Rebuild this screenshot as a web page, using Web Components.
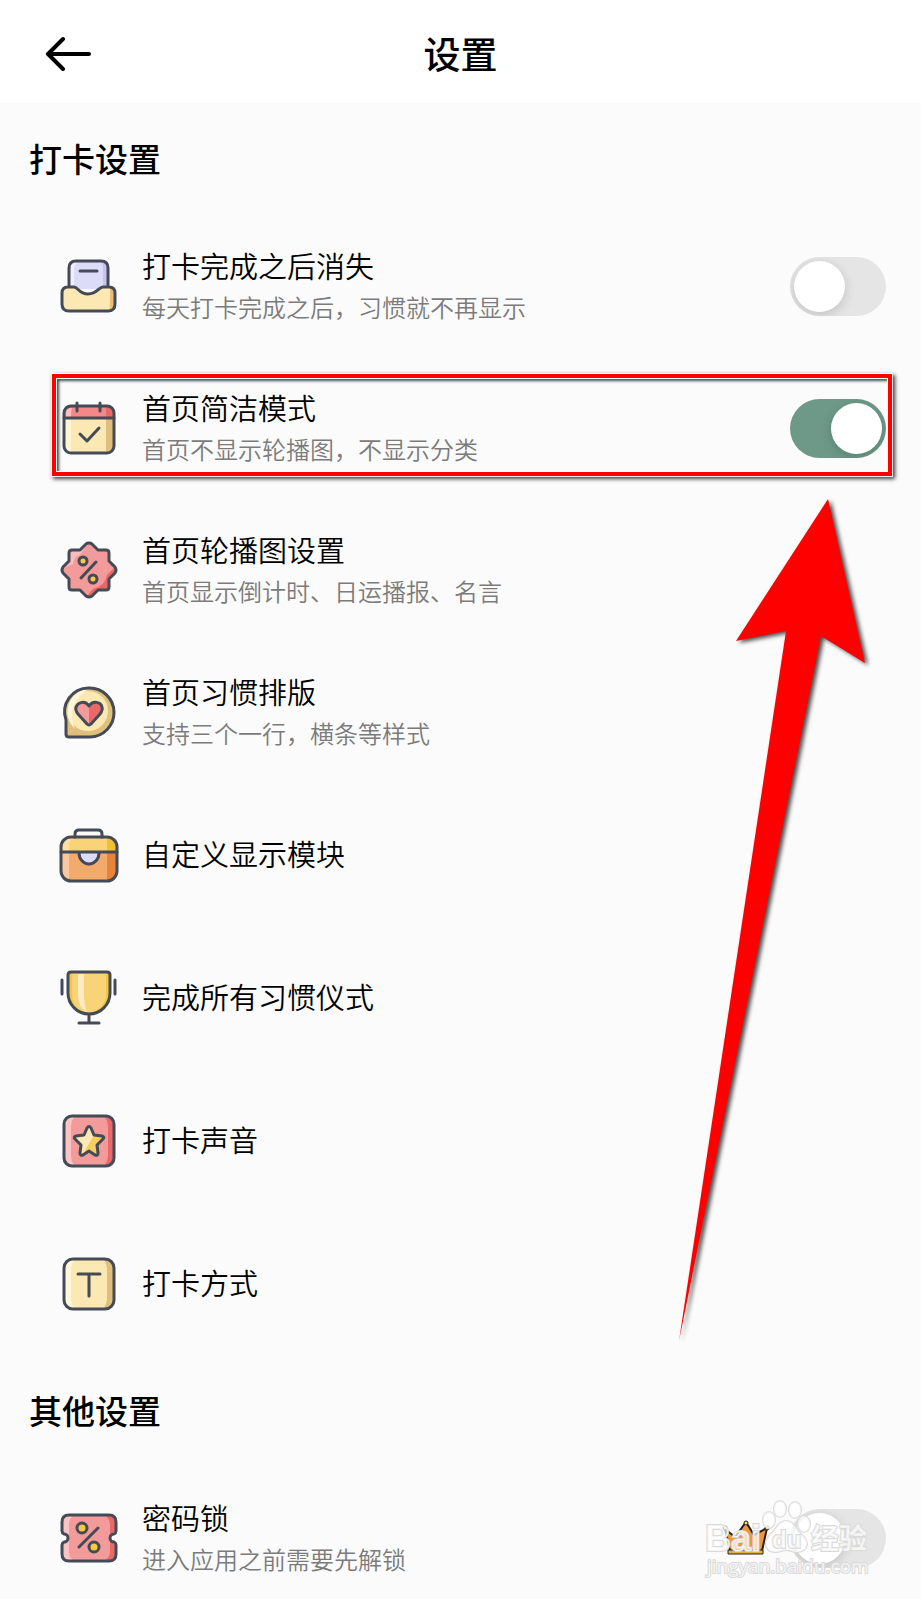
<!DOCTYPE html>
<html lang="zh-CN">
<head>
<meta charset="utf-8">
<meta name="viewport" content="width=device-width, initial-scale=1">
<title>设置</title>
<style>
  body {
    margin: 0;
    background: #FBFBFB;
    color: #000;
    font-family: "Noto Sans CJK SC", "Noto Sans", sans-serif;
  }
</style>
</head>
<body>
<settings-page>
  <page-header slot="header">设置</page-header>
  <settings-section>
    <span slot="title">打卡设置</span>
    <settings-row type="switch" icon="tray">打卡完成之后消失<span slot="note">每天打卡完成之后，习惯就不再显示</span></settings-row>
    <settings-row type="switch" icon="calendar" checked marked>首页简洁模式<span slot="note">首页不显示轮播图，不显示分类</span></settings-row>
    <settings-row icon="badge">首页轮播图设置<span slot="note">首页显示倒计时、日运播报、名言</span></settings-row>
    <settings-row icon="heart">首页习惯排版<span slot="note">支持三个一行，横条等样式</span></settings-row>
    <settings-row icon="bag" single>自定义显示模块</settings-row>
    <settings-row icon="trophy" single>完成所有习惯仪式</settings-row>
    <settings-row icon="star" single>打卡声音</settings-row>
    <settings-row icon="type" single>打卡方式</settings-row>
  </settings-section>
  <settings-section>
    <span slot="title">其他设置</span>
    <settings-row type="switch" icon="ticket">密码锁<span slot="note">进入应用之前需要先解锁</span></settings-row>
  </settings-section>
  <pointer-arrow slot="overlay"></pointer-arrow>
  <site-watermark slot="overlay"></site-watermark>
</settings-page>

<script>
const icons = {
  tray: `
    <path fill="#DCDCF8" d="M11 33V12q0-7 7-7h25q7 0 7 7v21z"/>
    <path fill="#F0F0FD" d="M12 31V12q0-5 5-5h2q-3 2-3 6v18z"/>
    <path fill="#C5C5EF" d="M43 6q6 1 6 7v18h-4V13q0-5-2-7z"/>
    <path fill="#FCE8B2" d="M10 31h6c4 0 5 7 14 7s11-7 15-7h6q6 0 6 6v11q0 7-7 7H11q-7 0-7-7V37q0-6 6-6z"/>
    <path fill="#E8BE78" d="M52 31q5 1 5 6v11q0 6-6 7 1-2 1-7z"/>
    <path class="line" d="M11 31V12q0-7 7-7h25q7 0 7 7v19M22 15h17M10 31h6c4 0 5 7 14 7s11-7 15-7h6q6 0 6 6v11q0 7-7 7H11q-7 0-7-7V37q0-6 6-6z"/>`,
  calendar: `
    <rect x="6" y="8" width="50" height="47" rx="7" fill="#FCE8B2"/>
    <path fill="#FFF4D4" d="M7 20h6v34q-6 0-6-6z"/>
    <path fill="#DFBF7B" d="M48 20h7v28q0 6-7 6z"/>
    <path fill="#F48787" d="M6 20v-5q0-7 7-7h36q7 0 7 7v5z"/>
    <path fill="#FBC0C0" d="M8 19v-4q0-5 6-5-1 2-1 9z"/>
    <path fill="#E96969" d="M48 9q7 0 7 6v5h-7z"/>
    <rect class="line" x="6" y="8" width="50" height="47" rx="7"/>
    <path class="line" d="M6 20h50M19 5v8M42 5v8M22 36l7 7 12-13"/>`,
  badge: `
    <path fill="#F39A9A" d="M31 3q2 0 3 1l6 6h8q3 0 3 3v8l6 6q2 3 0 6l-6 6v8q0 3-3 3h-8l-6 6q-3 2-6 0l-6-6h-8q-3 0-3-3v-8l-6-6q-2-3 0-6l6-6v-8q0-3 3-3h8l6-6q1-1 3-1z"/>
    <path fill="#F9BDBD" d="M29 5l-6 6h-9q-2 0-2 3v8l-6 6 9-4q1-8 7-9z"/>
    <path fill="#E96666" d="M56 28l2 2-7 8v9q0 3-4 3h-8l-8 8-2-2 6-7q12-3 14-14z"/>
    <path class="line" d="M31 3q2 0 3 1l6 6h8q3 0 3 3v8l6 6q2 3 0 6l-6 6v8q0 3-3 3h-8l-6 6q-3 2-6 0l-6-6h-8q-3 0-3-3v-8l-6-6q-2-3 0-6l6-6v-8q0-3 3-3h8l6-6q1-1 3-1z"/>
    <path class="line" d="M23 38l15-16"/>
    <circle class="line gold" cx="25" cy="21" r="4"/>
    <circle class="line gold" cx="35" cy="39" r="4"/>`,
  heart: `
    <path fill="#DFBF7B" d="M31 6a24 24 0 0 1 1 49H11q-3 0-3-3V38A24 24 0 0 1 31 6z"/>
    <circle cx="30" cy="29" r="20" fill="#FCE8B2"/>
    <path fill="#FFF6DC" d="M31 7a23 23 0 0 0-14 40A30 30 0 0 1 31 7z"/>
    <path fill="#F39A9A" d="M31 43l-11-11q-3-4-2-7c2-5 9-7 13-1 4-6 12-4 13 1q1 3-2 7z"/>
    <path fill="#EA6868" d="M31 42V24c4-6 12-4 13 1q1 3-2 7z"/>
    <path class="line" d="M31 6a24 24 0 0 1 1 49H11q-3 0-3-3V38A24 24 0 0 1 31 6z"/>
    <path class="line" d="M29 42l-9-10q-3-4-2-7c2-5 9-7 13-1 4-6 12-4 13 1q1 3-2 7l-9 10q-2 2-4 0z"/>`,
  bag: `
    <rect x="3" y="12" width="56" height="44" rx="10" fill="#F3AA6D"/>
    <path fill="#F8C99F" d="M4 28h7v27q-7-1-7-9z"/>
    <path fill="#E98339" d="M49 28h9v18q0 9-9 9z"/>
    <path fill="#F8D377" d="M3 27v-5q0-10 10-10h36q10 0 10 10v5z"/>
    <path fill="#FBE2A3" d="M5 26v-5q0-7 8-7-2 4-2 12z"/>
    <path fill="#F2BF32" d="M49 13q9 0 9 9v5h-9z"/>
    <path fill="#DCDCF8" d="M21 28a10 11 0 0 0 20 0z"/>
    <path class="line" d="M3 27h56M21 28a10 11 0 0 0 20 0M17 12V9q0-4 4-4h19q4 0 4 4v3"/>
    <rect class="line" x="3" y="12" width="56" height="44" rx="10"/>`,
  trophy: `
    <path fill="#F8D377" d="M13 4h36q3 0 3 3v18a21 21 0 0 1-42 0V7q0-3 3-3z"/>
    <path fill="#FCEBC4" d="M20 6h6v20q0 10 3 18-9-4-9-18z"/>
    <path fill="#F4C63F" d="M48 6h3v19q0 18-19 20 16-4 16-20zM11 6h3v20q0 9 5 14-8-5-8-15z"/>
    <path class="line" d="M13 4h36q3 0 3 3v18a21 21 0 0 1-42 0V7q0-3 3-3zM31 46v9M21 55h20M4 12v14M57 12v14"/>`,
  star: `
    <rect x="6" y="5" width="50" height="50" rx="8" fill="#F39A9A"/>
    <path fill="#FBC3C3" d="M14 6h2q-3 4-3 9v30q0 5 3 9h-3q-6-1-6-7V13q0-7 7-7z"/>
    <path fill="#EA6868" d="M47 6q8 0 8 8v33q0 7-8 7 3-5 3-9V15q0-5-3-9z"/>
    <path fill="#FCE8B2" d="M31 16l4 8 10 2-7 8 2 10-9-4-9 4 1-10-6-8 10-2z"/>
    <path fill="#F7CD63" d="M36 24l9 2-7 8 2 10-9-4-6 3z"/>
    <path class="line" d="M29 17q2-3 4 0l3 7 8 1q3 1 1 3l-6 6 1 8q0 3-3 2l-6-4-6 4q-3 1-3-2l1-8-6-6q-2-2 1-3l8-1z"/>
    <rect class="line" x="6" y="5" width="50" height="50" rx="8"/>`,
  type: `
    <rect x="6" y="5" width="50" height="50" rx="9" fill="#FCE8B2"/>
    <path fill="#FFF6DC" d="M14 6h2q-3 4-3 9v30q0 5 3 9h-3q-6-1-6-7V13q0-7 7-7z"/>
    <path fill="#DFBF7B" d="M46 6q9 0 9 9v31q0 8-9 8 3-5 3-9V15q0-5-3-9z"/>
    <rect class="line" x="6" y="5" width="50" height="50" rx="9"/>
    <path class="line" d="M20 20h22M31 20v22"/>`,
  ticket: `
    <path fill="#F39A9A" d="M11 7h40q7 0 7 7v9q0 2-2 3a4 4 0 0 0 0 8q2 1 2 3v9q0 7-7 7H11q-7 0-7-7v-9q0-2 2-3a4 4 0 0 0 0-8q-2-1-2-3v-9q0-7 7-7z"/>
    <path fill="#FBC3C3" d="M11 8h4q-4 3-4 8v28q0 5 4 8h-4q-6 0-6-6v-9l6-4v-6l-6-4v-9q0-6 6-6z"/>
    <path fill="#EA6868" d="M48 8h3q6 0 6 6v9q-10 7 0 14v9q0 6-6 6h-3q4-4 4-8V16q0-4-4-8z"/>
    <path class="line" d="M11 7h40q7 0 7 7v9q0 2-2 3a4 4 0 0 0 0 8q2 1 2 3v9q0 7-7 7H11q-7 0-7-7v-9q0-2 2-3a4 4 0 0 0 0-8q-2-1-2-3v-9q0-7 7-7zM21 39l19-19"/>
    <circle class="line gold" cx="24" cy="20" r="5"/>
    <circle class="line gold" cx="36" cy="39" r="5"/>`
};

customElements.define('settings-page', class SettingsPage extends HTMLElement {
  constructor() {
    super();
    this.attachShadow({mode: 'open'});
    this.shadowRoot.innerHTML = this.template;
  }

  get template() {
    return `<style>
      :host {
        display: flex;
        flex-direction: column;
        position: relative;
        height: 100vh;
        overflow: hidden;
      }
      main {
        flex: 1;
        min-height: 0;
        overflow-y: auto;
        scrollbar-width: none;
      }
    </style>
    <slot name="header"></slot>
    <main><slot></slot></main>
    <slot name="overlay"></slot>`;
  }
});

customElements.define('page-header', class PageHeader extends HTMLElement {
  constructor() {
    super();
    this.attachShadow({mode: 'open'});
    this.shadowRoot.innerHTML = this.template;
  }

  get template() {
    return `<style>
      :host {
        display: block;
        background: #FFF;
      }
      header {
        display: grid;
        grid-template-columns: 60px 1fr 60px;
        align-items: center;
        height: 103px;
        padding: 2px 38px 0;
        box-sizing: border-box;
      }
      button {
        display: flex;
        align-items: center;
        justify-content: center;
        height: 60px;
        padding: 0;
        border: 0;
        background: none;
        cursor: pointer;
      }
      h1 {
        margin: 0;
        font-size: 37px;
        font-weight: 500;
        line-height: 54px;
        text-align: center;
      }
    </style>
    <header>
      <button type="button" aria-label="返回">
        <svg width="48" height="36" viewBox="0 0 48 36" fill="none" stroke="#000" stroke-width="4" stroke-linecap="round" stroke-linejoin="round"><path d="M45 19H4M19 4L4 19l15 15"/></svg>
      </button>
      <h1><slot></slot></h1>
    </header>`;
  }
});

customElements.define('settings-section', class SettingsSection extends HTMLElement {
  constructor() {
    super();
    this.attachShadow({mode: 'open'});
    this.shadowRoot.innerHTML = this.template;
  }

  get template() {
    return `<style>
      :host {
        display: block;
      }
      h2 {
        margin: 0;
        padding: 31px 29px 33px;
        font-size: 33px;
        font-weight: 500;
        line-height: 48px;
      }
    </style>
    <section>
      <h2><slot name="title"></slot></h2>
      <slot></slot>
    </section>`;
  }
});

customElements.define('toggle-switch', class ToggleSwitch extends HTMLElement {
  constructor() {
    super();
    this.attachShadow({mode: 'open'});
    this.shadowRoot.innerHTML = this.template;
  }

  get template() {
    return `<style>
      :host {
        display: block;
      }
      label {
        display: flex;
        align-items: center;
        cursor: pointer;
      }
      .body {
        flex: 1;
      }
      input {
        appearance: none;
        display: flex;
        flex: none;
        width: 96px;
        height: 59px;
        margin: 0;
        padding: 4px;
        box-sizing: border-box;
        border-radius: 30px;
        background: #E5E5E6;
        overflow: hidden;
        cursor: pointer;
      }
      input::before {
        content: "";
        width: 51px;
        height: 51px;
        border-radius: 50%;
        background: #FFF;
        box-shadow: 0 3px 12px rgba(0, 0, 0, 0.16);
      }
      input:checked {
        justify-content: flex-end;
        background: #6E9988;
      }
    </style>
    <label>
      <span class="body"><slot></slot></span>
      <input type="checkbox" role="switch"${this.hasAttribute('checked') ? ' checked' : ''}>
    </label>`;
  }
});

customElements.define('settings-row', class SettingsRow extends HTMLElement {
  constructor() {
    super();
    this.attachShadow({mode: 'open'});
    this.shadowRoot.innerHTML = this.template;
  }

  get content() {
    return `<span class="item">
      <svg width="60" height="60" viewBox="0 0 60 60" aria-hidden="true">${icons[this.getAttribute('icon')]}</svg>
      <span class="text">
        <span class="title"><slot></slot></span>
        <slot name="note"></slot>
      </span>
    </span>`;
  }

  get control() {
    if (this.getAttribute('type') === 'switch') {
      return `<toggle-switch${this.hasAttribute('checked') ? ' checked' : ''}>${this.content}</toggle-switch>`;
    }
    return `<button type="button">${this.content}</button>`;
  }

  get template() {
    return `<style>
      :host {
        display: flex;
        flex-direction: column;
        justify-content: center;
        position: relative;
        height: 142px;
        padding: 0 35px 0 58px;
        box-sizing: border-box;
        font-weight: 350;
      }
      :host([single]) {
        height: 143px;
      }
      :host([single]) .text {
        padding-bottom: 3px;
      }
      :host([marked])::after {
        content: "";
        position: absolute;
        inset: 17px 29px 23px 52px;
        border: 4px solid #F00;
        outline: 1px solid rgba(255, 255, 255, 0.9);
        box-shadow: 2px 2px 4px 1px rgba(0, 0, 0, 0.75), inset 0 0 0 1px #FFF, inset 3px 3px 3px rgba(0, 0, 0, 0.7);
        pointer-events: none;
      }
      button {
        width: 100%;
        padding: 0;
        border: 0;
        background: none;
        color: inherit;
        font: inherit;
        text-align: left;
        cursor: pointer;
      }
      .item {
        display: flex;
        align-items: center;
        gap: 24px;
      }
      svg {
        flex: none;
        overflow: visible;
      }
      .line {
        fill: none;
        stroke: #444B57;
        stroke-width: 3;
        stroke-linecap: round;
        stroke-linejoin: round;
      }
      .gold {
        fill: #F9C940;
      }
      .text {
        display: flex;
        flex-direction: column;
      }
      .title {
        font-size: 29px;
        line-height: 42px;
      }
      ::slotted([slot="note"]) {
        color: #7B7B7B;
        font-size: 24px;
        line-height: 42px;
      }
    </style>
    ${this.control}`;
  }
});

customElements.define('pointer-arrow', class PointerArrow extends HTMLElement {
  constructor() {
    super();
    this.attachShadow({mode: 'open'});
    this.shadowRoot.innerHTML = this.template;
  }

  get template() {
    return `<style>
      :host {
        display: block;
        position: absolute;
        top: 499px;
        right: 55px;
        pointer-events: none;
      }
      svg {
        display: block;
        overflow: visible;
        filter: drop-shadow(3px 2px 2px rgba(0, 0, 0, 0.7));
      }
    </style>
    <svg width="130" height="843" viewBox="0 0 130 843" aria-hidden="true"><path fill="#F00" d="M92 0l37 164-44-27-142 705L50 132 0 142z"/></svg>`;
  }
});

customElements.define('site-watermark', class SiteWatermark extends HTMLElement {
  constructor() {
    super();
    this.attachShadow({mode: 'open'});
    this.shadowRoot.innerHTML = this.template;
  }

  get template() {
    return `<style>
      :host {
        display: block;
        position: absolute;
        right: 41px;
        bottom: 35px;
        pointer-events: none;
      }
      svg {
        display: block;
        overflow: visible;
      }
      .mark {
        fill: #FFF;
        fill-opacity: 0.7;
        stroke: #DADADA;
        stroke-width: 2;
        paint-order: stroke;
      }
      .latin {
        font: bold 36px "Liberation Sans", sans-serif;
      }
      .small {
        font: bold 24px "Liberation Sans", sans-serif;
      }
      .han {
        font: bold 28px "Noto Sans CJK SC", sans-serif;
      }
      .site {
        font: 19px "Open Sans", sans-serif;
      }
    </style>
    <svg width="180" height="84" viewBox="0 0 180 84">
      <path fill="#F2953A" stroke="#222" stroke-width="2" stroke-linejoin="round" d="M25 49l10 8 11-15 8 13 13-7-5 23H30z"/>
      <path fill="#E3B23C" stroke="#222" d="M28 70h35v4H28z"/>
      <g fill="#F9DA5A" stroke="#222"><circle cx="25" cy="48" r="2"/><circle cx="46" cy="43" r="2"/><circle cx="67" cy="48" r="2"/></g>
      <g class="mark">
        <ellipse cx="80" cy="29" rx="6" ry="8"/>
        <ellipse cx="95" cy="30" rx="6" ry="8"/>
        <ellipse cx="69" cy="40" rx="6" ry="8"/>
        <ellipse cx="104" cy="44" rx="6" ry="8"/>
        <path d="M86 41c-7 0-9 6-12 10-4 4-8 7-8 13 0 6 5 8 10 8 4 0 6-2 10-2s7 2 11 2c5 0 10-3 10-8 0-6-5-9-9-13-3-4-5-10-12-10z"/>
      </g>
      <text class="mark latin" x="5" y="71">Bai</text>
      <text class="mark small" x="72" y="68">du</text>
      <text class="mark han" x="111" y="69">经验</text>
      <text class="mark site" x="7" y="93">jingyan.baidu.com</text>
    </svg>`;
  }
});
</script>
</body>
</html>
